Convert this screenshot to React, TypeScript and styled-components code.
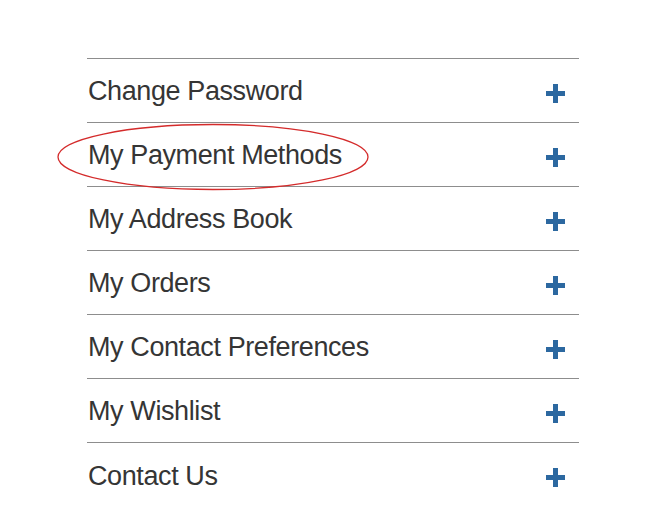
import React, { FC } from "react";
import styled, { createGlobalStyle } from "styled-components";

const GlobalStyle = createGlobalStyle`
  html, body {
    margin: 0;
    padding: 0;
    background: #ffffff;
  }
  body {
    font-family: "Liberation Sans", Arial, Helvetica, sans-serif;
  }
`;

const Page = styled.div`
  width: 671px;
  height: 530px;
  padding: 58px 0 0 87px;
  box-sizing: border-box;
`;

const Menu = styled.ul`
  list-style: none;
  margin: 0;
  padding: 0;
  width: 492px;
  border-top: 1.5px solid #8d8d8d;
`;

const Row = styled.li<{ $last?: boolean }>`
  position: relative;
  box-sizing: border-box;
  display: flex;
  align-items: center;
  justify-content: space-between;
  height: 64px;
  border-bottom: ${(p) => (p.$last ? "none" : "1.5px solid #8d8d8d")};
  padding: 0 14px 0 1px;
  cursor: pointer;
`;

const Label = styled.span`
  font-size: 27px;
  color: #353535;
  letter-spacing: -0.4px;
  margin-top: 2px;
`;

const PlusBox = styled.span`
  display: flex;
  margin-top: 5px;
`;

const Highlight = styled.svg`
  position: absolute;
  left: -31px;
  top: -1px;
  pointer-events: none;
`;

const PlusIcon: FC = () => (
  <PlusBox>
    <svg width="19" height="19" viewBox="0 0 19 19">
      <rect x="0" y="7" width="19" height="5" fill="#2c68a0" />
      <rect x="7" y="0" width="5" height="19" fill="#2c68a0" />
    </svg>
  </PlusBox>
);

const items = [
  "Change Password",
  "My Payment Methods",
  "My Address Book",
  "My Orders",
  "My Contact Preferences",
  "My Wishlist",
  "Contact Us",
];

const App: FC = () => {
  return (
    <>
      <GlobalStyle />
      <Page>
        <Menu>
          {items.map((item, i) => (
            <Row key={item} $last={i === items.length - 1}>
              <Label>{item}</Label>
              <PlusIcon />
              {item === "My Payment Methods" && (
                <Highlight width="314" height="70" viewBox="0 0 314 70">
                  <ellipse
                    cx="157"
                    cy="35"
                    rx="155"
                    ry="32.5"
                    fill="none"
                    stroke="#d42b2b"
                    strokeWidth="1.3"
                  />
                </Highlight>
              )}
            </Row>
          ))}
        </Menu>
      </Page>
    </>
  );
};

export default App;
